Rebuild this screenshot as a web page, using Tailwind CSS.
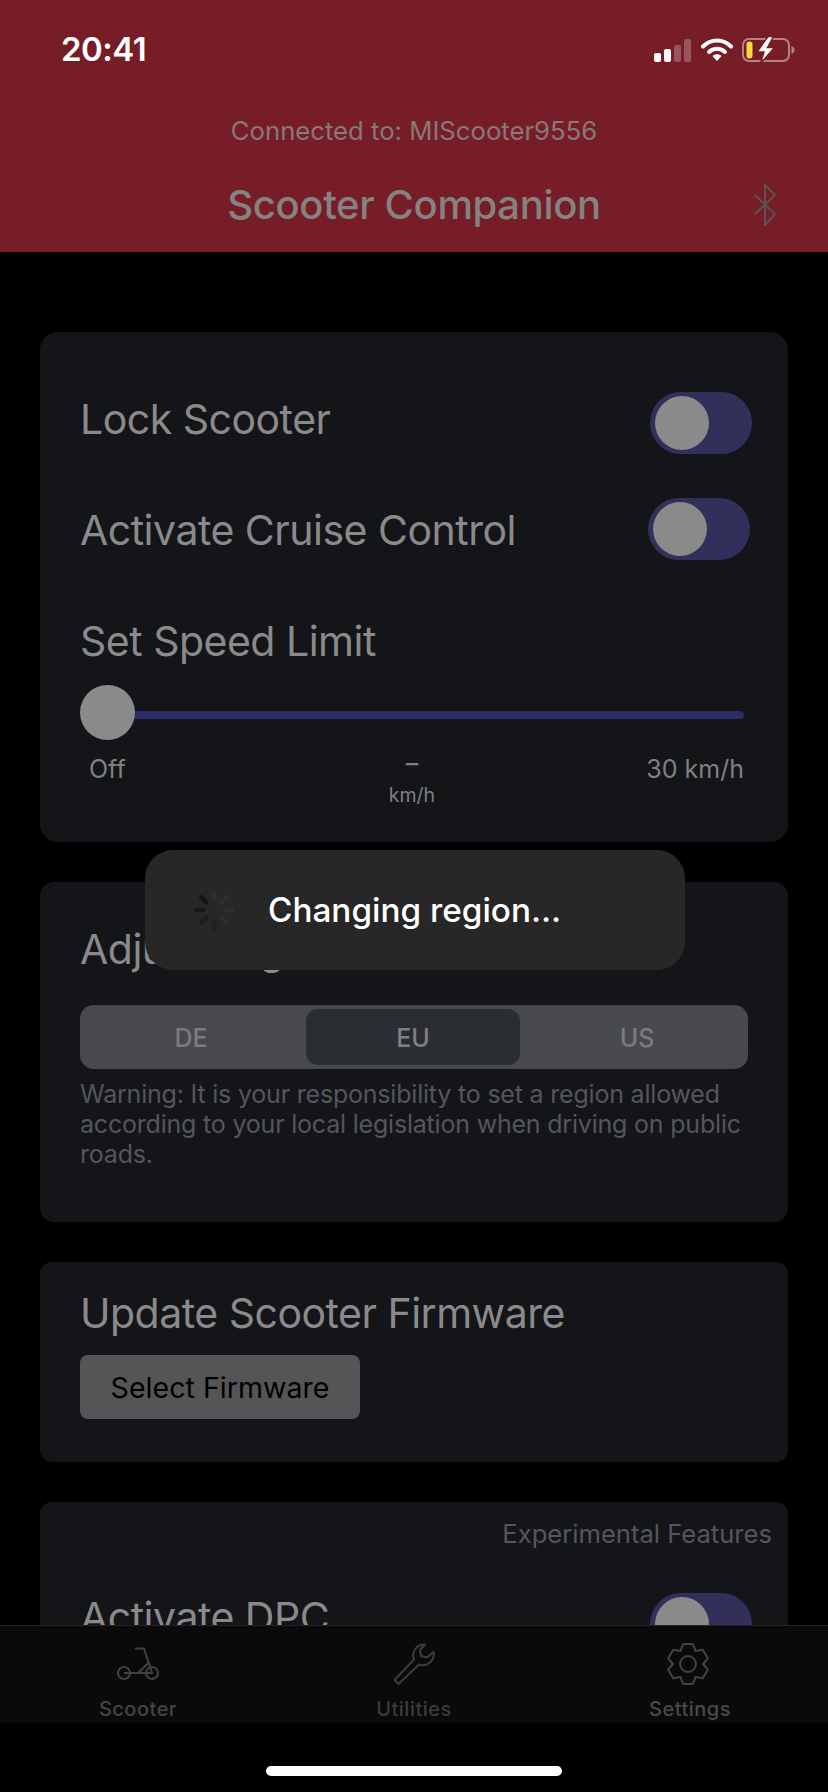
<!DOCTYPE html>
<html>
<head>
<meta charset="utf-8">
<script src="https://cdn.jsdelivr.net/npm/@tailwindcss/browser@4"></script>
</head>
<body class="m-0 bg-black">
<div class="relative flex h-[1792px] w-[828px] flex-col overflow-hidden bg-black font-['Inter',sans-serif]">

  <!-- Header -->
  <header class="h-[252px] shrink-0 bg-[#771d27]">
    <div class="flex h-[98px] items-center justify-between pl-[61px] pr-[33px] pt-[2px]">
      <span class="-mt-[1px] text-[33px] font-semibold leading-none tracking-[-0.5px] text-white">20:41</span>
      <div class="flex items-center gap-[9px]">
        <div class="flex h-[24px] items-end gap-[3px]">
          <div class="h-[9px] w-[7px] rounded-[2px] bg-white"></div>
          <div class="h-[13px] w-[7px] rounded-[2px] bg-white"></div>
          <div class="h-[17px] w-[7px] rounded-[2px] bg-white/25"></div>
          <div class="h-[23px] w-[7px] rounded-[2px] bg-white/25"></div>
        </div>
        <svg width="32" height="24" viewBox="0 0 32 24" class="ml-[1px]">
          <path d="M2 8.5 C10 0.5 22 0.5 30 8.5" fill="none" stroke="#fff" stroke-width="4" stroke-linecap="round"/>
          <path d="M8 14 C12.5 9.8 19.5 9.8 24 14" fill="none" stroke="#fff" stroke-width="4" stroke-linecap="round"/>
          <path d="M11.5 18 C14 15.5 18 15.5 20.5 18 L16 23 Z" fill="#fff"/>
        </svg>
        <svg width="53" height="28" viewBox="0 0 53 28">
          <rect x="1" y="3" width="46" height="22" rx="6" fill="none" stroke="#fff" stroke-opacity="0.45" stroke-width="2"/>
          <rect x="4.5" y="5.5" width="6" height="17" rx="3" fill="#fdd83f"/>
          <path d="M49.5 10 C51.5 10.7 52.5 12 52.5 14 C52.5 16 51.5 17.3 49.5 18 Z" fill="#fff" fill-opacity="0.45"/>
          <path d="M26 0.5 L15 16 L22 16 L18.5 27.5 L32.5 11.5 L25.5 11.5 L31.5 0.5 Z" fill="#fff" stroke="#771d27" stroke-width="1.5"/>
        </svg>
      </div>
    </div>
    <p class="mt-[18px] text-center text-[25.7px] leading-[30px] text-[#87797b]">Connected to: MIScooter9556</p>
    <div class="mt-[35px] grid grid-cols-[1fr_auto_1fr] items-center">
      <div></div>
      <h1 class="text-[40px] font-medium leading-[48px] tracking-[-0.35px] text-[#858283]">Scooter Companion</h1>
      <svg width="24" height="42" viewBox="0 0 24 42" class="mr-[51px] justify-self-end" fill="none" stroke="#5a5457" stroke-width="2">
        <path d="M2 11 L22 30 L12 41 V1 L22 11 L2 30"/>
      </svg>
    </div>
  </header>

  <!-- Scrolling content -->
  <main class="flex min-h-0 flex-1 flex-col gap-[40px] overflow-hidden px-[40px] pt-[80px] text-[#8a8a8a]">

    <!-- Card 1 -->
    <section class="h-[510px] shrink-0 rounded-[18px] bg-[#141519] pl-[40px] pr-[36px] pt-[60px]">
      <div class="flex h-[62px] items-start justify-between">
        <span class="mt-[3px] text-[41px] leading-[48px] tracking-[-0.5px]">Lock Scooter</span>
        <div class="h-[62px] w-[102px] rounded-full bg-[#32305a] p-[4px] pl-[5px]"><div class="size-[54px] rounded-full bg-[#8a8a8a]"></div></div>
      </div>
      <div class="mt-[44px] flex h-[62px] items-start justify-between pr-[2px]">
        <span class="mt-[8px] text-[41px] leading-[48px] tracking-[-0.5px]">Activate Cruise Control</span>
        <div class="h-[62px] w-[102px] rounded-full bg-[#32305a] p-[4px] pl-[5px]"><div class="size-[54px] rounded-full bg-[#8a8a8a]"></div></div>
      </div>
      <div class="mt-[57px] text-[41px] leading-[48px] tracking-[-0.5px]">Set Speed Limit</div>
      <div class="mr-[8px] mt-[20px] flex h-[55px] items-center">
        <div class="z-10 size-[55px] shrink-0 rounded-full bg-[#8a8a8a]"></div>
        <div class="-ml-[2px] mt-[4px] h-[8px] flex-1 rounded-r-full bg-[#2b2b66]"></div>
      </div>
      <div class="mr-[8px] mt-[14px] grid grid-cols-3 text-[25px] leading-[30px] text-[#808080]">
        <span class="pl-[9px]">Off</span>
        <div class="-mt-[6px] flex flex-col items-center">
          <span class="font-medium">–</span>
          <span class="mt-[6px] text-[19.5px] leading-[22px]">km/h</span>
        </div>
        <span class="text-right">30 km/h</span>
      </div>
    </section>

    <!-- Card 2 -->
    <section class="h-[340px] shrink-0 rounded-[14px] bg-[#141519] px-[40px] pt-[43px]">
      <div class="text-[41px] leading-[48px] tracking-[-0.5px]">Adjust Region</div>
      <div class="mt-[32px] grid h-[64px] grid-cols-[222px_214px_1fr] items-center rounded-[14px] bg-[#48494d] p-[4px] text-center text-[25px] font-medium text-[#7a7b7e]">
        <span class="pr-[8px] pt-[3px]">DE</span>
        <span class="flex h-[56px] items-center justify-center rounded-[12px] bg-[#2a2d31] pt-[3px] text-[#7f8083]">EU</span>
        <span class="pl-[10px] pt-[3px]">US</span>
      </div>
      <p class="mt-[10px] text-[25px] leading-[30px] tracking-[-0.2px] text-[#55565a]">Warning: It is your responsibility to set a region allowed according to your local legislation when driving on public roads.</p>
    </section>

    <!-- Card 3 -->
    <section class="h-[200px] shrink-0 rounded-[12px] bg-[#141519] px-[40px] pt-[27px]">
      <div class="text-[41px] leading-[48px] tracking-[-0.5px]">Update Scooter Firmware</div>
      <button class="mt-[18px] flex h-[64px] w-[280px] items-center justify-center rounded-[8px] bg-[#555558] pt-[2px] text-[28.6px] text-black">Select Firmware</button>
    </section>

    <!-- Card 4 -->
    <section class="h-[300px] shrink-0 rounded-[12px] bg-[#141519] pl-[40px] pr-[36px] pt-[17px]">
      <div class="-mr-[20px] text-right text-[25.6px] leading-[30px] text-[#55565a]">Experimental Features</div>
      <div class="mt-[44px] flex h-[62px] items-start justify-between">
        <span class="text-[41px] leading-[48px] tracking-[-0.5px]">Activate DPC</span>
        <div class="h-[62px] w-[102px] rounded-full bg-[#32305a] p-[4px] pl-[5px]"><div class="size-[54px] rounded-full bg-[#8a8a8a]"></div></div>
      </div>
    </section>
  </main>

  <!-- Tab bar -->
  <nav class="grid h-[98px] shrink-0 grid-cols-3 border-t border-[#232326] bg-[#0a0a0a] text-center text-[20px] font-medium leading-[24px] tracking-[0.5px]">
    <div class="flex flex-col items-center pt-[17px] text-[#454545]">
      <svg width="42" height="42" viewBox="0 0 42 42" fill="none" stroke="#424242" stroke-width="2">
        <circle cx="7" cy="30" r="6"/>
        <circle cx="35" cy="30" r="6"/>
        <path d="M7 30 H35 L27 5.5 H18"/>
        <path d="M21 30 L31.5 20"/>
      </svg>
      <span class="mt-[12px]">Scooter</span>
    </div>
    <div class="flex flex-col items-center pt-[17px] text-[#3c3c3c]">
      <svg width="42" height="42" viewBox="0 0 42 42" fill="none" stroke="#3d3d3d" stroke-width="2" stroke-linejoin="round">
        <path d="M1.5 37 L21 16.5 A11 11 0 0 1 32 1.5 L27 7 L28 13 L34 14.5 L40.5 9 A11 11 0 0 1 26 21.5 L5.5 41 Z"/>
      </svg>
      <span class="mt-[12px]">Utilities</span>
    </div>
    <div class="flex flex-col items-center pt-[17px] text-[#4a4a4a]">
      <svg width="42" height="42" viewBox="0 0 42 42" class="-ml-[4px]" fill="none" stroke="#444444" stroke-width="2" stroke-linejoin="round">
        <polygon points="16,1 26,1 28.5,8 35.8,6.67 40.82,15.33 36,21 40.82,26.67 35.8,35.33 28.5,34 26,41 16,41 13.5,34 6.2,35.33 1.18,26.67 6,21 1.18,15.33 6.2,6.67 13.5,8"/>
        <circle cx="21" cy="21" r="8"/>
      </svg>
      <span class="mt-[12px]">Settings</span>
    </div>
  </nav>

  <!-- Home indicator area -->
  <div class="flex h-[69px] shrink-0 items-start justify-center bg-black pt-[43px]">
    <div class="h-[10px] w-[296px] rounded-full bg-white"></div>
  </div>

  <!-- Toast -->
  <div class="absolute left-[145px] top-[850px] flex h-[120px] w-[540px] items-center rounded-[28px] bg-[#272727] pl-[49px]">
    <svg width="40" height="40" viewBox="0 0 40 40" stroke-width="4.5" stroke-linecap="round">
      <path d="M20 2 V9" stroke="#2e2e2e"/>
      <path d="M32.7 7.3 L27.8 12.2" stroke="#2f2f2f"/>
      <path d="M38 20 H31" stroke="#2e2e2e"/>
      <path d="M32.7 32.7 L27.8 27.8" stroke="#2c2c2c"/>
      <path d="M20 38 V31" stroke="#1f1f1f"/>
      <path d="M7.3 32.7 L12.2 27.8" stroke="#1c1c1c"/>
      <path d="M2 20 H9" stroke="#181818"/>
      <path d="M7.3 7.3 L12.2 12.2" stroke="#141414"/>
    </svg>
    <span class="ml-[34px] text-[33.3px] font-medium leading-[40px] text-white">Changing region...</span>
  </div>
</div>
</body>
</html>
